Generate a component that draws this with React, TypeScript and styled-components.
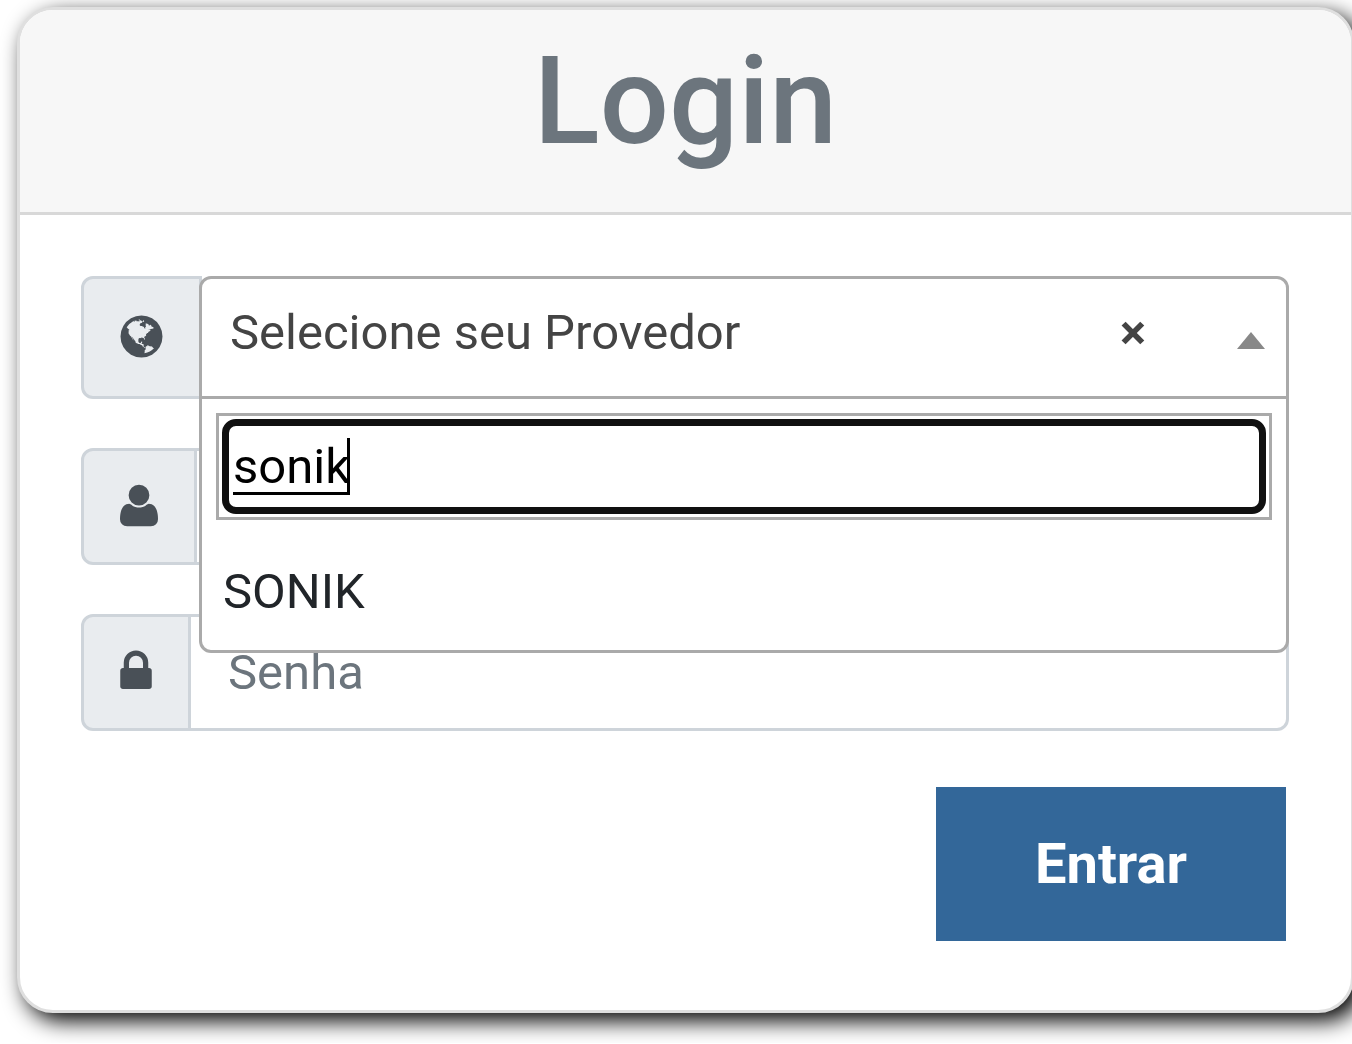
import React, { useState } from 'react';
import styled, { createGlobalStyle } from 'styled-components';

const GlobalStyle = createGlobalStyle`
  *, *::before, *::after { box-sizing: border-box; }
  html { overflow-x: hidden; }
  body {
    margin: 0;
    background: #fff;
    color: #212529;
    font-family: Roboto, "Liberation Sans", sans-serif;
    font-size: 49px;
    line-height: 72px;
  }
  input, button { font: inherit; }
`;

const Page = styled.main`
  padding: 7px 0 30px 17px;
  overflow: hidden;
`;

const Card = styled.section`
  margin-right: -2px;
  border: 3px solid #dfdfdf;
  border-radius: 36px;
  background: #fff;
  box-shadow: 8px 8px 22px #000;
`;

const CardHeader = styled.header`
  padding: 19px 61px 37px;
  border-bottom: 3px solid #d8d8d8;
  border-radius: 33px 33px 0 0;
  background: #f7f7f7;
  text-align: center;
`;

const Title = styled.h1`
  margin: 0;
  color: #6c757d;
  font-size: 122px;
  font-weight: 500;
  line-height: 146px;
`;

const Form = styled.form`
  display: flex;
  flex-direction: column;
  gap: 49px;
  padding: 61px 62px 69px 61px;
`;

const Field = styled.div<{ $tall?: boolean }>`
  position: relative;
  display: flex;
  height: ${(p) => (p.$tall ? 123 : 117)}px;
`;

const Addon = styled.label`
  display: flex;
  flex: none;
  align-items: center;
  margin-right: -3px;
  padding: 0 36px 2px;
  border: 3px solid #ced4da;
  border-radius: 12px 0 0 12px;
  background: #e9ecef;
  color: #495057;
`;

const Icon = styled.svg`
  display: block;
  height: 49px;
  fill: currentColor;
`;

const TextInput = styled.input`
  flex: 1;
  min-width: 0;
  padding: 0 37px;
  border: 3px solid #ced4da;
  border-radius: 0 12px 12px 0;
  outline: 0;
  background: #fff;
  color: #495057;
  &::placeholder { color: #6c757d; opacity: 1; }
`;

const Select = styled.div`
  position: relative;
  display: flex;
  flex: 1;
  min-width: 0;
  align-items: center;
  padding: 0 21px 10px 0;
  border: 3px solid #aaa;
  border-radius: 12px 12px 0 0;
  background: #fff;
`;

const Selection = styled.button`
  flex: 1;
  min-width: 0;
  padding: 0 28px;
  border: 0;
  background: none;
  color: #444;
  text-align: left;
  cursor: pointer;
`;

const Clear = styled.button`
  margin-right: 91px;
  padding: 0;
  border: 0;
  background: none;
  color: #444;
  font-weight: 700;
  cursor: pointer;
`;

const Arrow = styled.span`
  margin-top: 16px;
  border: solid transparent;
  border-width: 0 14px 17px;
  border-bottom-color: #888;
`;

const Dropdown = styled.div`
  position: absolute;
  z-index: 1;
  top: 117px;
  right: -3px;
  left: -3px;
  padding: 14px;
  border: 3px solid #aaa;
  border-radius: 0 0 12px 12px;
  background: #fff;
`;

const SearchFrame = styled.div`
  padding: 3px;
  border: 3px solid #aaa;
`;

const SearchBox = styled.label`
  display: flex;
  align-items: center;
  height: 95px;
  padding: 0 4px;
  border: 7px solid #101010;
  border-radius: 14px;
  cursor: text;
`;

const SearchInput = styled.input`
  field-sizing: content;
  max-width: 100%;
  height: 72px;
  padding: 0;
  border: 0;
  outline: 0;
  background: none;
  color: #000;
  text-decoration: underline 3px;
  text-underline-offset: 9px;
  text-decoration-skip-ink: none;
`;

const Caret = styled.span`
  width: 3px;
  height: 57px;
  margin-left: -3px;
  background: #000;
`;

const Options = styled.ul`
  margin: 0;
  padding: 36px 7px 8px;
  list-style: none;
`;

const Submit = styled.button`
  align-self: flex-end;
  width: 350px;
  height: 154px;
  margin: 7px 3px 0 0;
  border: 0;
  background: #336799;
  color: #fff;
  font-size: 56px;
  font-weight: 700;
  cursor: pointer;
`;

const GlobeIcon = () => (
  <Icon viewBox="0 0 1536 1792" width="43" aria-hidden="true">
    <path
      fillRule="evenodd"
      d="M768 128q209 0 385.5 103t279.5 279.5 103 385.5-103 385.5-279.5 279.5-385.5 103-385.5-103-279.5-279.5-103-385.5 103-385.5 279.5-279.5 385.5-103zM1042 649q-2 1-9.5 9.5t-13.5 9.5q2 0 4.5-5t5-11 3.5-7q6-7 22-15 14-6 52-12 34-8 51 11-2-2 9.5-13t14.5-12q3-2 15-4.5t15-7.5l2-22q-12 1-17.5-7t-6.5-21q0 2-6 8 0-7-4.5-8t-11.5 1-9 1q-10-3-15-7.5t-8-16.5-4-15q-2-5-9.5-11t-9.5-10q-1-2-2.5-5.5t-3-6.5-4-5.5-5.5-2.5-7 5-7.5 10-4.5 5q-3-2-6-1.5t-4.5 1-4.5 3-5 3.5q-3 2-8.5 3t-8.5 2q15-5-1-11-10-4-16-3 9-4 7.5-12t-8.5-14h5q-1-4-8.5-8.5t-17.5-8.5-13-6q-8-5-34-9.5t-33-.5q-5 6-4.5 10.5t4 14 3.5 12.5q1 6-5.5 13t-6.5 12q0 7 14 15.5t10 21.5q-3 8-16 16t-16 12q-5 8-1.5 18.5t10.5 16.5q2 2 1.5 4t-3.5 4.5-5.5 4-6.5 3.5l-3 2q-11 5-20.5-6t-13.5-26q-7-25-16-30-23-8-29 1-5-13-41-26-25-9-58-4 6-1 0-15-7-15-19-12 3-6 4-17.5t1-13.5q3-13 12-23 1-1 7-8.5t9.5-13.5.5-6q35 4 50-11 5-5 11.5-17t10.5-17q9-6 14-5.5t14.5 5.5 14.5 5q14 1 15.5-11t-7.5-20q12 1 3-17-4-7-8-9-12-4-27 5-8 4 2 8-1-1-9.5 10.5t-16.5 17.5-16-5q-1-1-5.5-13.5t-9.5-13.5q-8 0-16 15 3-8-11-15t-24-8q19-12-8-27-7-4-20.5-5t-19.5 4q-5 7-5.5 11.5t5 8 10.5 5.5 11.5 4 8.5 3q14 10 8 14-2 1-8.5 3.5t-11.5 4.5-6 4q-3 4 0 14t-2 14q-5-5-9-17.5t-7-16.5q7 9-25 6l-10-1q-4 0-16 2t-20.5 1-13.5-8q-4-8 0-20 1-4 4-2-4-3-11-9.5t-10-8.5q-46 15-94 41 6 1 12-1 5-2 13-6.5t10-5.5q34-14 42-7l5-5q14 16 20 25-7-4-30-1-20 6-22 12 7 12 5 18-4-3-11.5-10t-14.5-11-15-5q-16 0-22 1-146 80-235 222 7 7 12 8 4 1 5 9t2.5 11 11.5-3q9 8 3 19 1-1 44 27 19 17 21 21 3 11-10 18-1-2-9-9t-9-4q-3 5 .5 18.5t10.5 12.5q-7 0-9.5 16t-2.5 35.5-1 23.5l2 1q-3 12 5.5 34.5t21.5 19.5q-13 3 20 43 6 8 8 9 3 2 12 7.5t15 10 10 10.5q4 5 10 22.5t14 23.5q-2 6 9.5 20t10.5 23q-1 0-2.5 1t-2.5 1q3 7 15.5 14t15.5 13q1 3 2 10t3 11 8 2q2-20-24-62-15-25-17-29-3-5-5.5-15.5t-4.5-14.5q2 0 6 1.5t8.5 3.5 7.5 4 2 3q-3 7 2 17.5t12 18.5 17 19 12 13q6 6 14 19.5t0 13.5q9 0 20 10.5t17 19.5q5 8 8 26t5 24q2 7 8.5 13.5t12.5 9.5l16 8 13 7q5 2 18.5 10.5t21.5 11.5q10 4 16 4t14.5-2.5 13.5-3.5q15-2 29 15t21 21q36 19 55 11-2 1 .5 7.5t8 15.5 9 14.5 5.5 8.5q5 6 18 15t18 15q6-4 7-9-3 8 7 20t18 10q14-3 14-32-31 15-49-18 0-1-2.5-5.5t-4-8.5-2.5-8.5 0-7.5 5-3q9 0 10-3.5t-2-12.5-4-13q-1-8-11-20t-12-15q-5 9-16 8t-16-9q0 1-1.5 5.5t-1.5 6.5q-13 0-15-1 1-3 2.5-17.5t3.5-22.5q1-4 5.5-12t7.5-14.5 4-12.5-4.5-9.5-17.5-2.5q-19 1-26 20-1 3-3 10.5t-5 11.5-9 7q-7 3-24 2t-24-5q-13-8-22.5-29t-9.5-37q0-10 2.5-26.5t3-25-5.5-24.5q3-2 9-9.5t10-10.5q2-1 4.5-1.5t4.5 0 4-1.5 3-6q-1-1-4-3-3-3-4-3 7 3 28.5-1.5t27.5 1.5q15 11 22-2 0-1-2.5-9.5t-.5-13.5q5 27 29 9 3 3 15.5 5t17.5 5q3 2 7 5.5t5.5 4.5 5-.5 8.5-6.5q10 14 12 24 11 40 19 44 7 3 11 2t4.5-9.5 0-14-1.5-12.5l-1-8v-18l-1-8q-15-3-18.5-12t1.5-18.5 15-18.5q1-1 8-3.5t15.5-6.5 12.5-8q21-19 15-35 7 0 11-9-1 0-5-3t-7.5-5-4.5-2q9-5 2-16 5-3 7.5-11t7.5-10q9 12 21 2 8-8 1-16 5-7 20.5-10.5t18.5-9.5q7 2 8-2t1-12 3-12q4-5 15-9t13-5l17-11q3-4 0-4 18 2 31-11 10-11-6-20 3-6-3-9.5t-15-5.5q3-1 11.5-.5t10.5-1.5q15-10-7-16-17-5-43 12zM879 1509q206-36 351-189-3-3-12.5-4.5t-12.5-3.5q-18-7-24-8 1-7-2.5-13t-8-9-12.5-8-11-7q-2-2-7-6t-7-5.5-7.5-4.5-8.5-2-10 1l-3 1q-3 1-5.5 2.5t-5.5 3-4 3 0 2.5q-21-17-36-22-5-1-11-5.5t-10.5-7-10-1.5-11.5 7q-5 5-6 15t-2 13q-7-5 0-17.5t2-18.5q-3-6-10.5-4.5t-12 4.5-11.5 8.5-9 6.5-8.5 5.5-8.5 7.5q-3 4-6 12t-5 11q-2-4-11.5-6.5t-9.5-5.5q2 10 4 35t5 38q7 31-12 48-27 25-29 40-4 22 12 26 0 7-8 20.5t-7 21.5q0 6 2 16z"
    />
  </Icon>
);

const UserIcon = () => (
  <Icon viewBox="0 0 1408 1792" width="38" aria-hidden="true">
    <path d="M1408 1405q0 120-73 189.5t-194 69.5h-874q-121 0-194-69.5t-73-189.5q0-53 3.5-103.5t14-109 26.5-108.5 43-97.5 62-81 85.5-53.5 111.5-20q9 0 42 21.5t74.5 48 108 48 133.5 21.5 133.5-21.5 108-48 74.5-48 42-21.5q61 0 111.5 20t85.5 53.5 62 81 43 97.5 26.5 108.5 14 109 3.5 103.5zM1088 512q0 159-112.5 271.5t-271.5 112.5-271.5-112.5-112.5-271.5 112.5-271.5 271.5-112.5 271.5 112.5 112.5 271.5z" />
  </Icon>
);

const LockIcon = () => (
  <Icon viewBox="0 0 1152 1792" width="32" aria-hidden="true">
    <path d="M320 768h512v-192q0-106-75-181t-181-75-181 75-75 181v192zM1152 864v576q0 40-28 68t-68 28h-960q-40 0-68-28t-28-68v-576q0-40 28-68t68-28h32v-192q0-184 132-316t316-132 316 132 132 316v192h32q40 0 68 28t28 68z" />
  </Icon>
);

export default function App() {
  const [query, setQuery] = useState('sonik');
  const providers = ['SONIK'].filter((name) => name.includes(query.toUpperCase()));

  return (
    <>
      <GlobalStyle />
      <Page>
        <Card>
          <CardHeader>
            <Title>Login</Title>
          </CardHeader>
          <Form onSubmit={(e) => e.preventDefault()}>
            <Field $tall>
              <Addon htmlFor="provider">
                <GlobeIcon />
              </Addon>
              <Select>
                <Selection
                  id="provider"
                  type="button"
                  role="combobox"
                  aria-expanded="true"
                  aria-controls="provider-options"
                >
                  Selecione seu Provedor
                </Selection>
                <Clear type="button" onClick={() => setQuery('')}>×</Clear>
                <Arrow aria-hidden="true" />
                <Dropdown>
                  <SearchFrame>
                    <SearchBox htmlFor="provider-search">
                      <SearchInput
                        id="provider-search"
                        value={query}
                        autoComplete="off"
                        spellCheck={false}
                        onChange={(e) => setQuery(e.target.value)}
                      />
                      <Caret />
                    </SearchBox>
                  </SearchFrame>
                  <Options id="provider-options" role="listbox">
                    {providers.map((name) => (
                      <li key={name} role="option" aria-selected="false">{name}</li>
                    ))}
                  </Options>
                </Dropdown>
              </Select>
            </Field>
            <Field>
              <Addon htmlFor="user">
                <UserIcon />
              </Addon>
              <TextInput id="user" type="text" />
            </Field>
            <Field>
              <Addon htmlFor="password">
                <LockIcon />
              </Addon>
              <TextInput id="password" type="password" placeholder="Senha" />
            </Field>
            <Submit type="submit">Entrar</Submit>
          </Form>
        </Card>
      </Page>
    </>
  );
}
